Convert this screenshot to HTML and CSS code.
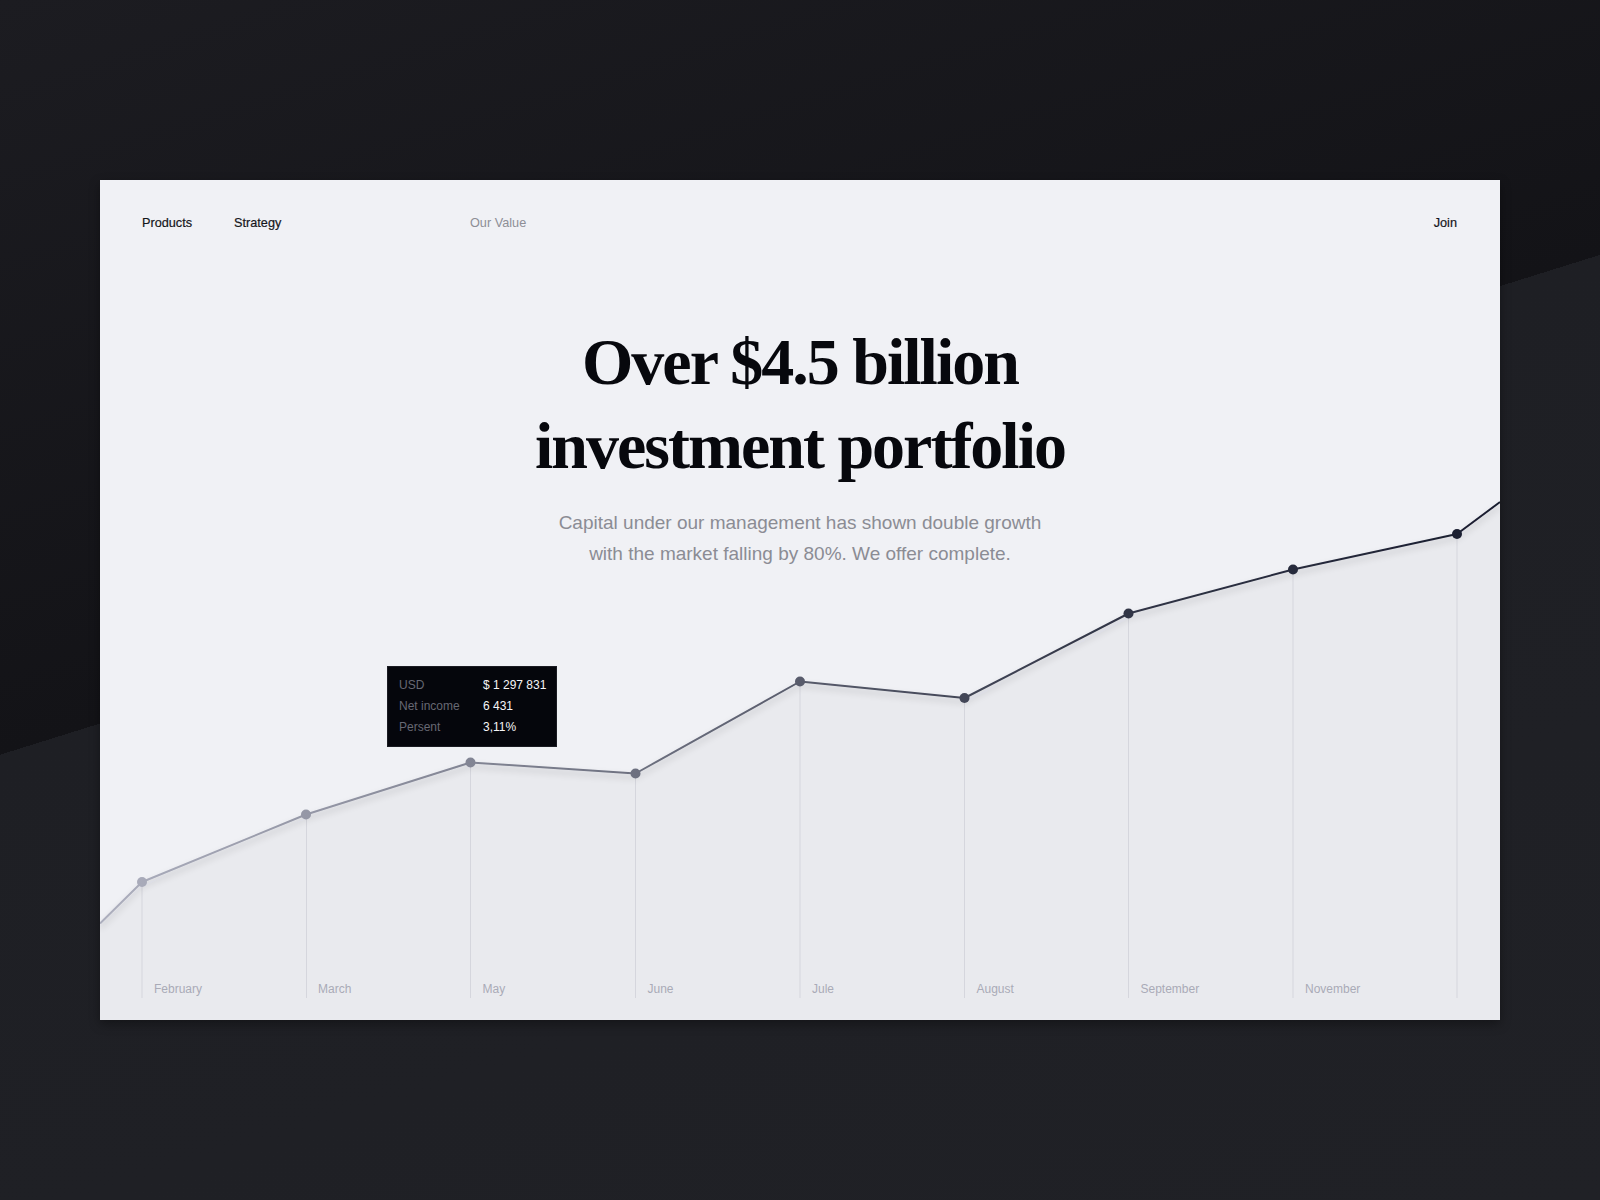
FILE: index.html
```html
<!DOCTYPE html>
<html lang="en">
<head>
<meta charset="utf-8">
<title>Investment portfolio</title>
<link rel="stylesheet" href="styles.css">
</head>
<body>
<main class="card">
  <svg class="chart" viewBox="0 0 1400 840" width="1400" height="840">
    <defs>
      <linearGradient id="lineGrad" gradientUnits="userSpaceOnUse" x1="0" y1="0" x2="1400" y2="0">
        <stop offset="0" stop-color="#adafbe"/>
        <stop offset="0.3" stop-color="#7c7f8e"/>
        <stop offset="0.7" stop-color="#343849"/>
        <stop offset="1" stop-color="#191d2f"/>
      </linearGradient>
      <filter id="shadow" x="-5%" y="-20%" width="110%" height="160%">
        <feDropShadow dx="0" dy="4" stdDeviation="3" flood-color="#1b1f31" flood-opacity="0.2"/>
      </filter>
    </defs>
    <path class="area" d="M0 743.5 L42 702 L206 634.5 L370.5 582.5 L535.5 593.5 L700 501.5 L864.5 518 L1028.5 433.5 L1193 389.5 L1357 354 L1400 322 L1400 840 L0 840 Z"/>
    <g class="grid">
      <line x1="42" y1="702" x2="42" y2="818"/>
      <line x1="206.5" y1="634.5" x2="206.5" y2="818"/>
      <line x1="370.5" y1="582.5" x2="370.5" y2="818"/>
      <line x1="535.5" y1="593.5" x2="535.5" y2="818"/>
      <line x1="700" y1="501.5" x2="700" y2="818"/>
      <line x1="864.5" y1="518" x2="864.5" y2="818"/>
      <line x1="1028.5" y1="433.5" x2="1028.5" y2="818"/>
      <line x1="1193" y1="389.5" x2="1193" y2="818"/>
      <line x1="1357" y1="354" x2="1357" y2="818"/>
    </g>
    <polyline class="line" points="0,743.5 42,702 206,634.5 370.5,582.5 535.5,593.5 700,501.5 864.5,518 1028.5,433.5 1193,389.5 1357,354 1400,322"/>
    <g class="dots">
      <circle cx="42" cy="702" r="5"/>
      <circle cx="206" cy="634.5" r="5"/>
      <circle cx="370.5" cy="582.5" r="5"/>
      <circle cx="535.5" cy="593.5" r="5"/>
      <circle cx="700" cy="501.5" r="5"/>
      <circle cx="864.5" cy="518" r="5"/>
      <circle cx="1028.5" cy="433.5" r="5"/>
      <circle cx="1193" cy="389.5" r="5"/>
      <circle cx="1357" cy="354" r="5"/>
    </g>
    <g class="months">
      <text x="54" y="813">February</text>
      <text x="218" y="813">March</text>
      <text x="382.5" y="813">May</text>
      <text x="547.5" y="813">June</text>
      <text x="712" y="813">Jule</text>
      <text x="876.5" y="813">August</text>
      <text x="1040.5" y="813">September</text>
      <text x="1205" y="813">November</text>
    </g>
  </svg>

  <nav class="nav">
    <div class="nav-group">
      <a class="nav-link" href="#">Products</a>
      <a class="nav-link" href="#">Strategy</a>
    </div>
    <a class="nav-link nav-link--muted" href="#">Our Value</a>
    <a class="nav-link" href="#">Join</a>
  </nav>

  <section class="hero">
    <h1 class="hero-title">Over $4.5 billion<br>investment portfolio</h1>
    <p class="hero-text">Capital under our management has shown double growth<br>with the market falling by 80%. We offer complete.</p>
  </section>

  <div class="tooltip">
    <span class="tooltip-label">USD</span><span class="tooltip-value">$ 1 297 831</span>
    <span class="tooltip-label">Net income</span><span class="tooltip-value">6 431</span>
    <span class="tooltip-label">Persent</span><span class="tooltip-value">3,11%</span>
  </div>
</main>
</body>
</html>
```

FILE: styles.css
```css
* {
  box-sizing: border-box;
}

html,
body {
  margin: 0;
  padding: 0;
}

body {
  min-height: 1200px;
  padding-top: 180px;
  font-family: "Liberation Sans", Arial, Helvetica, sans-serif;
  background: linear-gradient(162.65deg, #1c1c21 0%, #131317 44.4%, #1e1f24 44.4%, #202126 100%);
}

.card {
  position: relative;
  width: 1400px;
  height: 840px;
  margin: 0 auto;
  background: #f0f1f5;
  overflow: hidden;
  box-shadow: 0 4px 10px rgba(0, 0, 0, 0.35);
}

.chart {
  position: absolute;
  left: 0;
  top: 0;
  display: block;
}

.area {
  fill: #e9eaee;
}

.grid line {
  stroke: #d5d6dd;
  stroke-width: 1;
}

.line {
  fill: none;
  stroke: url(#lineGrad);
  stroke-width: 2;
  stroke-linejoin: round;
  filter: url(#shadow);
}

.dots circle {
  fill: url(#lineGrad);
}

.months text {
  font-family: "Liberation Sans", Arial, sans-serif;
  font-size: 12px;
  fill: #a9abb7;
}

.nav {
  position: relative;
  display: grid;
  grid-template-columns: 328px 1fr auto;
  align-items: center;
  padding: 34px 43px 0 42px;
}

.nav-group {
  display: flex;
  gap: 42px;
}

.nav-link {
  font-size: 12.7px;
  line-height: 19px;
  color: #15161b;
  text-decoration: none;
  -webkit-text-stroke: 0.2px #15161b;
}

.nav-link--muted {
  color: #8d8e96;
  -webkit-text-stroke: 0;
}

.hero {
  position: relative;
  margin-top: 87px;
  text-align: center;
}

.hero-title {
  margin: 0;
  font-family: "Liberation Serif", "Times New Roman", serif;
  font-weight: 700;
  font-size: 66px;
  line-height: 84px;
  letter-spacing: -2px;
  color: #07080d;
}

.hero-text {
  margin: 19px 0 0;
  font-size: 19px;
  line-height: 31px;
  color: #8b8c94;
}

.tooltip {
  position: absolute;
  left: 287px;
  top: 486px;
  width: 170px;
  height: 81px;
  display: grid;
  grid-template-columns: 84px 1fr;
  grid-auto-rows: 21px;
  align-items: center;
  padding: 7px 0 11px 11px;
  background: #05060c;
  border: 1px solid #1a1b22;
  font-size: 12px;
  white-space: nowrap;
}

.tooltip-label {
  color: #676873;
}

.tooltip-value {
  color: #f5f5f7;
}
```
